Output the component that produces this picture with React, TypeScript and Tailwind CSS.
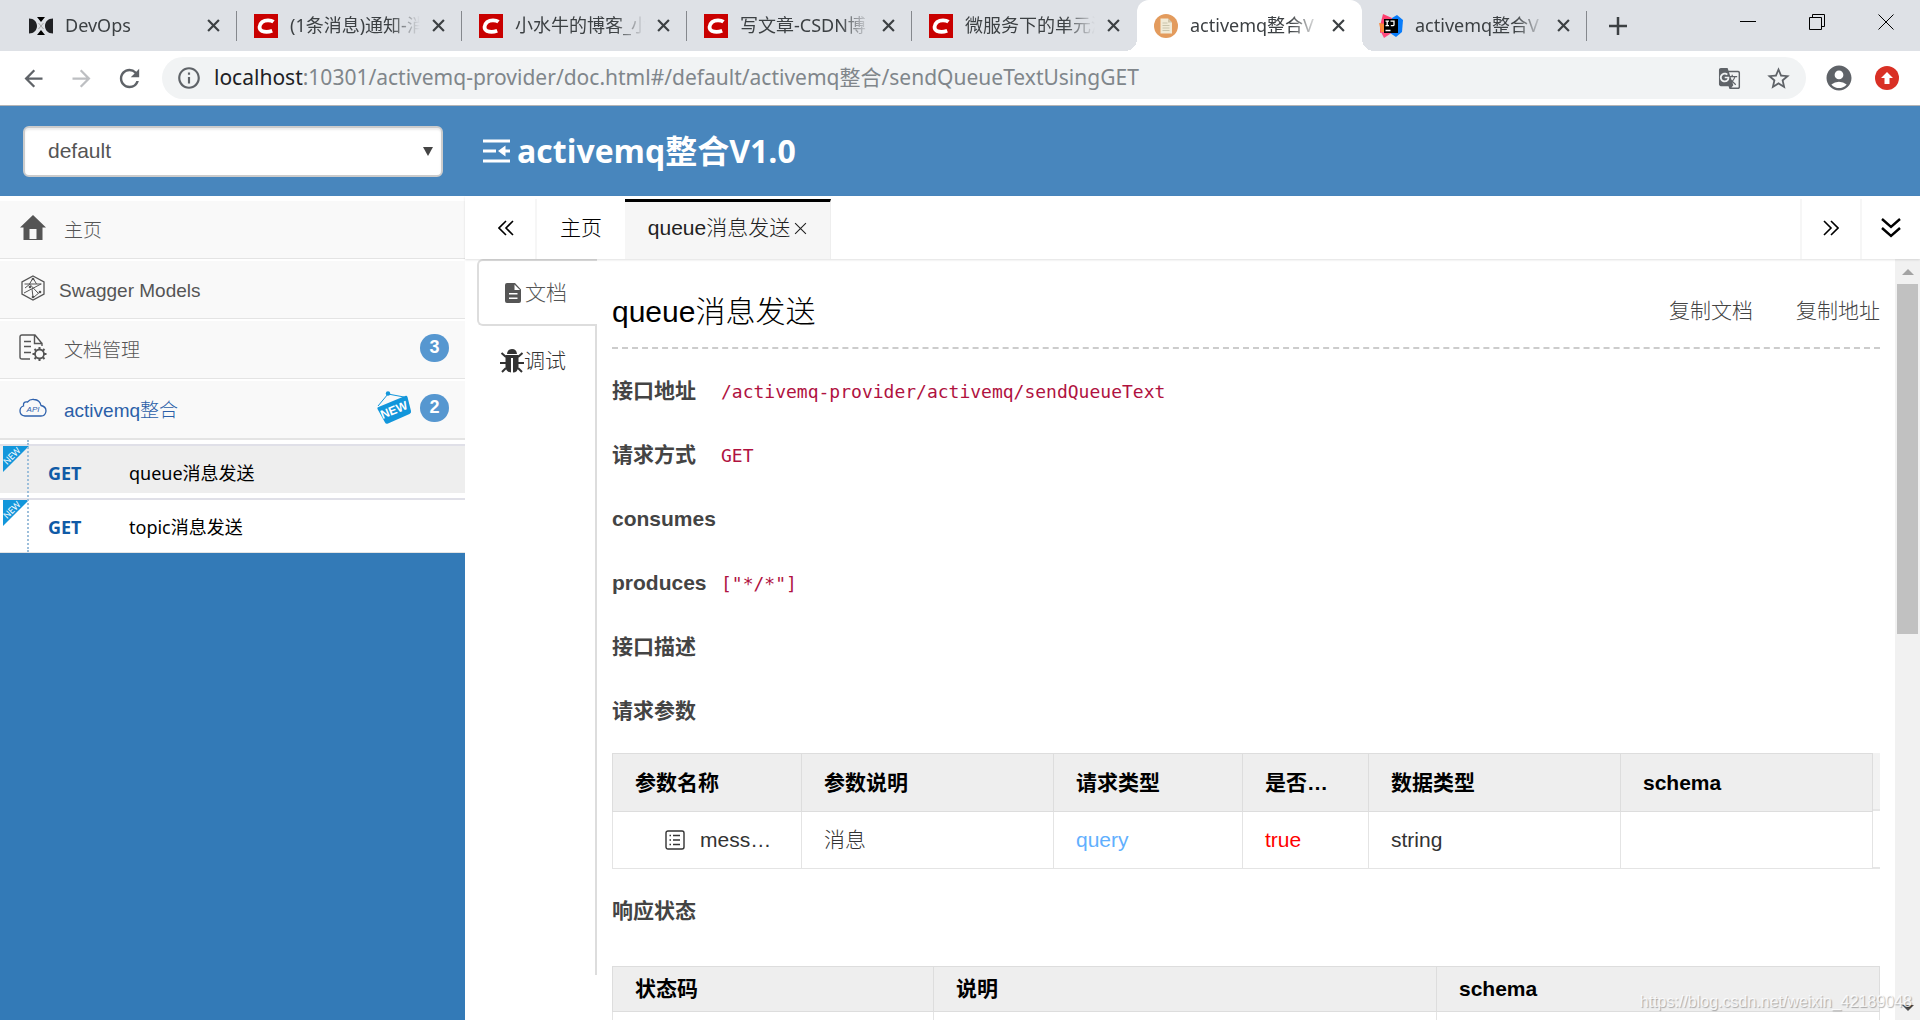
import React, { useState } from 'react';
import { MdInfoOutline, MdArrowBack, MdArrowForward, MdRefresh, MdGTranslate, MdStarBorder, MdAccountCircle } from 'react-icons/md';

const UI_FONT = "font-['Noto_Sans','Noto_Sans_CJK_SC',sans-serif]";
const TITLE_FONT = "font-['Open_Sans','Noto_Sans_CJK_SC',sans-serif]";
const PAGE_FONT = "font-['Liberation_Sans','Noto_Sans_CJK_SC',sans-serif]";

const CsdnIcon = () => (
  <svg className="h-6 w-6" viewBox="0 0 24 24">
    <rect width="24" height="24" fill="#c90000" />
    <path d="M19.500 7.800C17 6 11.500 5.500 8.200 8C4.800 10.800 4.600 15.300 8 17C11 18.300 15 18 18.200 16.800" fill="none" stroke="#fff" strokeWidth="3.800" />
  </svg>
);

const DevOpsIcon = () => (
  <svg className="h-6 w-6" viewBox="0 0 24 24" fill="#202124">
    <path d="M0 4.500C5 4.500 8 8 8 12S5 19.500 0 19.500ZM24 4.500C19 4.500 16 8 16 12S19 19.500 24 19.500Z" />
    <path d="M8 3h8l-4 5zM8 21h8l-4-5z" fill="#000" />
    <path d="M9.500 9l5 6M14.500 9l-5 6" stroke="#aaa" strokeWidth="1" />
  </svg>
);

const DocIcon = () => (
  <svg className="h-6 w-6" viewBox="0 0 24 24">
    <circle cx="12" cy="12" r="12" fill="#e39b5d" />
    <path d="M6.500 4.500h7.500l4 4v11H6.500z" fill="#f1ead6" />
    <path d="M14 4.500v4h4z" fill="#cfc6ac" />
    <path d="M8.500 9h5M8.500 11.500h7M8.500 14h7M8.500 16.500h7" stroke="#c9c4ac" strokeWidth="1" />
  </svg>
);

const IdeaIcon = () => (
  <svg className="h-6 w-6" viewBox="0 0 24 24">
    <path d="M4 0l9 4-3 11-9 4V12z" fill="#fe4070" />
    <path d="M0 9l6 1v9l-4-1z" fill="#fc8a3b" />
    <path d="M13 4l5-3 6 5-1 12-6 5-6-4z" fill="#087cfa" />
    <path d="M2 18h12l-9 6z" fill="#ff4c7f" />
    <rect x="5" y="5" width="14" height="14" fill="#000" />
    <path d="M6.500 7.200h3.500M8.200 7.200v4.500M6.500 11.700h3.500M11.500 7.200h3.500v3.500q0 1-1.200 1h-2M6.500 16.500h5" stroke="#fff" strokeWidth="1.300" fill="none" />
  </svg>
);

const CloseIcon = ({ className = '' }: { className?: string }) => (
  <svg className={className} viewBox="0 0 12 12" stroke="currentColor" fill="none">
    <path d="M1 1l10 10M11 1L1 11" />
  </svg>
);

interface BrowserTab {
  title: string;
  icon: React.ReactNode;
  active?: boolean;
  divider?: boolean;
}

const browserTabs: BrowserTab[] = [
  { title: 'DevOps', icon: <DevOpsIcon />, divider: true },
  { title: '(1条消息)通知-消', icon: <CsdnIcon />, divider: true },
  { title: '小水牛的博客_小', icon: <CsdnIcon />, divider: true },
  { title: '写文章-CSDN博', icon: <CsdnIcon />, divider: true },
  { title: '微服务下的单元测', icon: <CsdnIcon /> },
  { title: 'activemq整合V', icon: <DocIcon />, active: true },
  { title: 'activemq整合V', icon: <IdeaIcon />, divider: true },
];

const TabStrip = () => (
  <div className="flex h-[51px] shrink-0 bg-[#dee1e6] pl-3">
    {browserTabs.map((tab, i) => (
      <div
        key={i}
        className={`relative flex w-[225px] shrink-0 items-center pl-[17px] text-[18px] text-[#3c4043] ${tab.active ? 'rounded-t-xl bg-white' : ''}`}
      >
        {tab.icon}
        <span className="ml-3 w-[130px] whitespace-nowrap [mask-image:linear-gradient(to_right,black_100px,transparent_130px)]">
          {tab.title}
        </span>
        <button aria-label="关闭标签页" className="ml-3">
          <CloseIcon className="h-[13px] w-[13px] stroke-2" />
        </button>
        {tab.divider && <span className="absolute right-0 top-[11px] h-[30px] w-px bg-[#85888d]" />}
        {tab.active && (
          <>
            <span className="absolute -left-3 bottom-0 h-3 w-3 bg-[radial-gradient(circle_at_0_0,#dee1e6_12px,white_12px)]" />
            <span className="absolute -right-3 bottom-0 h-3 w-3 bg-[radial-gradient(circle_at_100%_0,#dee1e6_12px,white_12px)]" />
          </>
        )}
      </div>
    ))}
    <button aria-label="新标签页" className="ml-[22px] text-[#3c4043]">
      <svg className="h-[18px] w-[18px]" viewBox="0 0 18 18" stroke="currentColor" strokeWidth="2.500">
        <path d="M9 0v18M0 9h18" />
      </svg>
    </button>
    <div className="ml-auto flex h-[43px] items-center gap-[53px] pr-[26px]">
      <button aria-label="最小化">
        <svg className="h-4 w-4" viewBox="0 0 16 16" stroke="#000"><path d="M0 7.500h16" /></svg>
      </button>
      <button aria-label="还原">
        <svg className="h-4 w-4" viewBox="0 0 16 16" stroke="#000" fill="none"><path d="M.5 3.500h12v12H.5zM3.500 3.500v-3h12v12h-3" /></svg>
      </button>
      <button aria-label="关闭">
        <svg className="h-4 w-4" viewBox="0 0 16 16" stroke="#000"><path d="M.5.5l15 15M15.500.5l-15 15" /></svg>
      </button>
    </div>
  </div>
);

const AddressBar = () => (
  <div className="flex h-[55px] shrink-0 items-center border-b border-[#b4b4b6] bg-white pl-5 pr-[21px] text-[#5f6368]">
    <button aria-label="后退"><MdArrowBack size={27} /></button>
    <button aria-label="前进" className="ml-[21px] text-[#bdbfc2]"><MdArrowForward size={27} /></button>
    <button aria-label="重新加载" className="ml-5"><MdRefresh size={29} /></button>
    <div className="ml-[18px] flex h-[42px] flex-1 items-center rounded-full bg-[#f1f3f4] px-[14px]">
      <MdInfoOutline size={26} />
      <div className="ml-3 flex-1 whitespace-nowrap text-[21px] text-[#80868b]">
        <span className="text-[#202124]">localhost</span>:10301/activemq-provider/doc.html#/default/activemq整合/sendQueueTextUsingGET
      </div>
      <button aria-label="翻译此页"><MdGTranslate size={23} /></button>
      <button aria-label="收藏" className="ml-6"><MdStarBorder size={27} /></button>
    </div>
    <button aria-label="账户" className="ml-[18px]"><MdAccountCircle size={30} /></button>
    <button aria-label="更新" className="ml-[21px] flex h-6 w-6 items-center justify-center rounded-full bg-[#d93025]">
      <svg className="h-3 w-3" viewBox="0 0 12 12" fill="#fff"><path d="M6 0l6 6H8.500v6h-5V6H0z" /></svg>
    </button>
  </div>
);

const PageHeader = () => (
  <header className="flex h-[90px] shrink-0 items-center bg-[#4886bd] pl-[23px]">
    <div className="relative h-[51px] w-[420px]">
      <select
        aria-label="分组"
        defaultValue="default"
        className="h-full w-full appearance-none rounded-md border-2 border-[#ccc] bg-white pl-[23px] text-[21px] text-[#555] shadow-[inset_0_2px_2px_rgba(0,0,0,0.08)]"
      >
        <option value="default">default</option>
      </select>
      <svg className="pointer-events-none absolute right-[10px] top-[21px] h-[9px] w-[10px]" viewBox="0 0 10 9" fill="#444"><path d="M0 0h10L5 9z" /></svg>
    </div>
    <svg className="ml-10 h-6 w-[27px]" viewBox="0 0 27 24" fill="none" stroke="#fff" strokeWidth="3">
      <path d="M0 2h27M0 12h13M18 12h9M0 22h27" />
      <path d="M22.500 6.500L15 12l7.500 5.500z" fill="#fff" stroke="none" />
    </svg>
    <h1 className={`ml-[7px] text-[32px] font-bold text-white ${TITLE_FONT}`}>activemq整合V1.0</h1>
  </header>
);

const HomeIcon = () => (
  <svg className="h-[26px] w-[26px]" viewBox="0 0 26 26" fill="#555">
    <path d="M13 0L26 12.500H22.500V25H3.500V12.500H0zM9.500 14v10h7V14z" fillRule="evenodd" />
  </svg>
);

const ModelsIcon = () => (
  <svg className="h-[26px] w-[26px]" viewBox="0 0 26 26" fill="none" stroke="#555" strokeWidth="1">
    <path d="M13 1l11 6v12l-11 6-11-6V7z" strokeWidth="1.300" />
    <path d="M13 3L9.500 9M13 3l3.500 6M4.500 9h17M4 18L21 9M9.500 9l8.500 9M5 13l5-4M20 17l-6 5M12 14l1 8" />
    <g fill="#555" stroke="none">
      <circle cx="13" cy="4" r="1.300" /><circle cx="20" cy="17" r="1.300" /><circle cx="10" cy="12" r="1.300" /><circle cx="13" cy="22" r="1.300" />
    </g>
  </svg>
);

const DocManageIcon = () => (
  <svg className="h-7 w-7" viewBox="0 0 28 28" fill="none" stroke="#555" strokeWidth="1.400">
    <path d="M11 25H3Q1 25 1 23V3Q1 1 3 1H16L23 9.500M15.500 1.500V9.500H23V12M5 7.500h7M5 12.500h7M5 18.500h7" />
    <circle cx="20.500" cy="20" r="4.500" strokeWidth="1.800" />
    <path d="M20.500 13v2.500M20.500 24.500V27M13.500 20H16M25 20h2.500M15.500 15l2 2M23.500 23l2 2M25.500 15l-2 2M17.500 23l-2 2" strokeWidth="2" />
  </svg>
);

const ApiIcon = () => (
  <svg className="h-7 w-7" viewBox="0 0 28 28" fill="none" stroke="#2f62ad" strokeWidth="1.300">
    <path d="M6 22Q1 21.500 1 17Q1 13 4.500 12Q4 7 8.500 8Q11 5 15 5.500Q21 6 22 11.500Q27 12.500 27 17Q26.500 22 22 22Z" />
    <text x="14" y="17.500" textAnchor="middle" fontSize="8" fontStyle="italic" stroke="none" fill="#2f62ad">API</text>
  </svg>
);

const NewSign = () => (
  <svg className="h-[34px] w-[36px]" viewBox="0 0 36 34">
    <path d="M2 15L12 3 28 6" fill="none" stroke="#1296db" strokeWidth="1" />
    <circle cx="12" cy="2.500" r="2.200" fill="#1296db" />
    <path d="M2.500 16L29 5q2-.8 2.500 1L35 20q.5 2-1.500 3L12 32.500q-2 1-3-1L1.500 18q-.8-1.400 1-2z" fill="#1296db" />
    <text x="18" y="23" textAnchor="middle" fontSize="12" fontWeight="bold" fill="#fff" transform="rotate(-22 18 19)">NEW</text>
  </svg>
);

const Badge = ({ children }: { children: React.ReactNode }) => (
  <span className="flex h-7 w-[29px] items-center justify-center rounded-full bg-[#5697d0] pb-[2px] text-[18px] font-bold leading-none text-white">
    {children}
  </span>
);

interface MenuItemProps {
  icon: React.ReactNode;
  label: string;
  count?: number;
  isNew?: boolean;
  tight?: boolean;
  active?: boolean;
}

const MenuItem = ({ icon, label, count, isNew, tight, active }: MenuItemProps) => (
  <li className="border-b border-[#e4e4e4] bg-white pt-[2px]">
    <a
      href="#"
      className={`flex h-[57px] items-center bg-[#f9f9f9] pb-[3px] pl-[19px] pr-4 text-[19px] font-light ${active ? 'text-[#2b5fa8]' : 'text-[#555]'}`}
    >
      <span className="flex w-7 justify-center">{icon}</span>
      <span className={`pt-[6px] ${tight ? 'ml-3' : 'ml-[17px]'}`}>{label}</span>
      <span className="ml-auto flex items-center gap-2">
        {isNew && <NewSign />}
        {count && <Badge>{count}</Badge>}
      </span>
    </a>
  </li>
);

const apis = [
  { method: 'GET', name: 'queue消息发送' },
  { method: 'GET', name: 'topic消息发送' },
];

const Sidebar = () => {
  const [current, setCurrent] = useState(0);

  return (
    <nav className="w-[465px] shrink-0 bg-[#337ab7]">
      <ul className="bg-white pt-[3px]">
        <MenuItem icon={<HomeIcon />} label="主页" />
        <MenuItem icon={<ModelsIcon />} label="Swagger Models" tight />
        <MenuItem icon={<DocManageIcon />} label="文档管理" count={3} />
        <MenuItem icon={<ApiIcon />} label="activemq整合" count={2} isNew active />
      </ul>
      <ul className={`relative border-y border-[#e4e4e4] bg-white pt-1 ${UI_FONT}`}>
        {apis.map((api, i) => (
          <li key={api.name} className="relative border-t-2 border-[#e0e0e8] pb-[5px]">
            <button
              onClick={() => setCurrent(i)}
              className={`flex h-[47px] w-full items-center pl-12 pt-2 text-left text-[18px] ${current === i ? 'bg-[#eee]' : 'bg-white'}`}
            >
              <span className="w-[81px] font-bold text-[#0f5aa6]">{api.method}</span>
              <span className="text-black">{api.name}</span>
            </button>
            <svg className="absolute left-[3px] top-0 h-[26px] w-[26px]" viewBox="0 0 26 26">
              <path d="M0 0h26L0 26z" fill="#1296db" />
              <text x="9" y="13" textAnchor="middle" fontSize="9" fill="#fff" transform="rotate(-45 9 10)">NEW</text>
            </svg>
          </li>
        ))}
        <span className="absolute bottom-0 left-[27px] top-0 border-l-2 border-dotted border-[#9dbfdb]" />
      </ul>
    </nav>
  );
};

const Chevrons = ({ d }: { d: string }) => (
  <svg className="h-4 w-4" viewBox="0 0 16 16" fill="none" stroke="#000" strokeWidth="1.600">
    <path d={d} />
  </svg>
);

const PageTabs = () => (
  <div className="z-10 flex h-[63px] shrink-0 items-stretch bg-white pt-[3px] text-[21px] font-light shadow-[0_1px_2px_rgba(0,0,0,0.12)]">
    <button aria-label="向左滚动" className="flex w-[72px] items-center justify-center border-r-2 border-[#f6f6f6] pb-[2px] pl-3">
      <Chevrons d="M8 1L1 8l7 7M15 1L8 8l7 7" />
    </button>
    <button className="w-[88px] pb-[2px] text-black">主页</button>
    <div className="flex w-[206px] items-center justify-center border-r border-t-[3px] border-r-[#eee] border-t-black bg-[#f6f6f6] pb-[5px] text-[#222]">
      queue消息发送
      <button aria-label="关闭"><CloseIcon className="ml-1 h-[13px] w-[13px]" /></button>
    </div>
    <button aria-label="向右滚动" className="ml-auto flex w-[60px] items-center justify-center border-l-2 border-[#f6f6f6] pb-[2px]">
      <Chevrons d="M1 1l7 7-7 7M8 1l7 7-7 7" />
    </button>
    <button aria-label="更多" className="flex w-[60px] items-center justify-center border-l-2 border-[#f6f6f6] pb-[2px]">
      <svg className="h-5 w-5" viewBox="0 0 20 20" fill="none" stroke="#000" strokeWidth="2.400"><path d="M1 1l9 8 9-8M1 10l9 8 9-8" /></svg>
    </button>
  </div>
);

const SideTabs = () => (
  <div className="flex h-[716px] w-[120px] shrink-0 flex-col text-[21px] font-light">
    <button className="flex h-[67px] items-center rounded-l-md border-2 border-r-0 border-[#ddd] pl-[26px] text-[#555]">
      <svg className="mr-1 h-5 w-4" viewBox="0 0 16 20" fill="#555">
        <path d="M2 0h8l6 6.500V18q0 2-2 2H2q-2 0-2-2V2Q0 0 2 0zM9.500 1.500V7H15zM4 10v1.500h8.500V10zM4 14.500V16h8.500v-1.500z" fillRule="evenodd" />
      </svg>
      文档
    </button>
    <div className="flex-1 border-r-2 border-[#ddd]">
      <button className="flex h-[70px] items-center pl-[23px] text-[#333]">
        <svg className="h-6 w-6" viewBox="0 0 24 24" fill="#333">
          <path d="M7 5q.5-5 5-5t5 5z" />
          <path d="M5.500 6h13v12q-1 5.500-5.500 5.500V9h-2v14.500Q6 23 5.500 18z" />
          <path d="M1.500 4L6 8M22.500 4L18 8M0 14h6M18 14h6M2 23l4-4M22 23l-4-4" stroke="#333" strokeWidth="2" />
        </svg>
        调试
      </button>
    </div>
  </div>
);

const fields = [
  { label: '接口地址', value: '/activemq-provider/activemq/sendQueueText' },
  { label: '请求方式', value: 'GET' },
  { label: 'consumes', value: '' },
  { label: 'produces', value: '["*/*"]' },
  { label: '接口描述', value: '' },
];

const TH = 'truncate border border-[#ddd] px-[22px] text-left font-bold text-black';
const TD = 'truncate border border-[#e4e4e4] px-[22px]';

const ParamTable = () => (
  <div className="flex">
    <div className="min-w-0 flex-1">
      <table className="w-full table-fixed border-collapse">
        <colgroup>
          <col className="w-[15%]" /><col className="w-[20%]" /><col className="w-[15%]" />
          <col className="w-[10%]" /><col className="w-[20%]" /><col className="w-[20%]" />
        </colgroup>
        <thead>
          <tr className="h-[58px] bg-[#eee]">
            {['参数名称', '参数说明', '请求类型', '是否必须', '数据类型', 'schema'].map((h) => (
              <th key={h} className={TH}>{h}</th>
            ))}
          </tr>
        </thead>
        <tbody>
          <tr className="h-[57px] text-[#333]">
            <td className={TD}>
              <div className="flex items-center pl-[30px]">
                <svg className="mr-[15px] h-5 w-5 shrink-0" viewBox="0 0 20 20" fill="none" stroke="#333" strokeWidth="1.400">
                  <rect x="1" y="1" width="18" height="18" rx="2" />
                  <path d="M4.500 5.500H6M8 5.500h7M4.500 10H6M8 10h7M4.500 14.500H6M8 14.500h7" />
                </svg>
                <span className="truncate">message</span>
              </div>
            </td>
            <td className={`${TD} font-light`}>消息</td>
            <td className={`${TD} text-[#61affe]`}>query</td>
            <td className={`${TD} text-[#f00]`}>true</td>
            <td className={TD}>string</td>
            <td className={TD}></td>
          </tr>
        </tbody>
      </table>
    </div>
    <div className="flex w-[7px] flex-col">
      <div className="h-[58px] border-b-2 border-[#e6e6e6] bg-[#f2f2f2]" />
      <div className="flex-1 border-b-2 border-[#e6e6e6]" />
    </div>
  </div>
);

const StatusTable = () => (
  <table className="w-full table-fixed border-collapse">
    <colgroup>
      <col className="w-[321px]" /><col className="w-[503px]" /><col />
    </colgroup>
    <thead>
      <tr className="h-[45px] bg-[#eee]">
        {['状态码', '说明', 'schema'].map((h) => (
          <th key={h} className={TH}>{h}</th>
        ))}
      </tr>
    </thead>
    <tbody>
      <tr className="h-[45px]">
        <td className={TD}></td>
        <td className={TD}></td>
        <td className={TD}></td>
      </tr>
    </tbody>
  </table>
);

const LABEL = 'flex h-16 items-center font-bold text-[#444]';

const ApiDoc = () => (
  <section className="min-w-0 flex-1 overflow-hidden px-[15px] text-[21px]">
    <div className="flex h-[90px] items-center border-b-2 border-dashed border-[#ccc] pt-4 font-light">
      <h2 className="text-[30px] text-black">queue消息发送</h2>
      <div className="ml-auto flex gap-[43px] text-[#444]">
        <button>复制文档</button>
        <button>复制地址</button>
      </div>
    </div>
    <dl className="pt-[10px]">
      {fields.map((f) => (
        <div key={f.label} className="flex items-center">
          <dt className={`${LABEL} w-[109px]`}>{f.label}</dt>
          <dd className="whitespace-nowrap font-['DejaVu_Sans_Mono',monospace] text-[18px] text-[#b0123f]">{f.value}</dd>
        </div>
      ))}
    </dl>
    <h3 className={LABEL}>请求参数</h3>
    <div className="pt-[10px]"><ParamTable /></div>
    <h3 className={`${LABEL} mt-[10px]`}>响应状态</h3>
    <div className="pt-[23px]"><StatusTable /></div>
  </section>
);

const ScrollBar = () => (
  <div className="flex w-[25px] shrink-0 flex-col items-center bg-[#f1f1f1]">
    <div className="flex h-[25px] items-center">
      <svg className="h-[6px] w-3" viewBox="0 0 12 6" fill="#a3a3a3"><path d="M6 0l6 6H0z" /></svg>
    </div>
    <div className="h-[46%] w-[21px] bg-[#c1c1c1]" />
    <div className="mt-auto flex h-[25px] items-center">
      <svg className="h-[6px] w-3" viewBox="0 0 12 6" fill="#505050"><path d="M0 0h12L6 6z" /></svg>
    </div>
  </div>
);

export default function App() {
  return (
    <div className={`relative flex h-screen flex-col overflow-hidden bg-white ${PAGE_FONT}`}>
      <div className={`shrink-0 ${UI_FONT}`}>
        <TabStrip />
        <AddressBar />
      </div>
      <PageHeader />
      <div className="flex min-h-0 flex-1">
        <Sidebar />
        <main className="flex min-w-0 flex-1 flex-col">
          <PageTabs />
          <div className="flex min-h-0 flex-1 pl-3">
            <SideTabs />
            <ApiDoc />
            <ScrollBar />
          </div>
        </main>
      </div>
      <span className="pointer-events-none absolute bottom-[6px] right-2 text-[16px] text-white/80 [text-shadow:1px_1px_1px_rgba(0,0,0,0.3)]">
        https://blog.csdn.net/weixin_42189048
      </span>
    </div>
  );
}
